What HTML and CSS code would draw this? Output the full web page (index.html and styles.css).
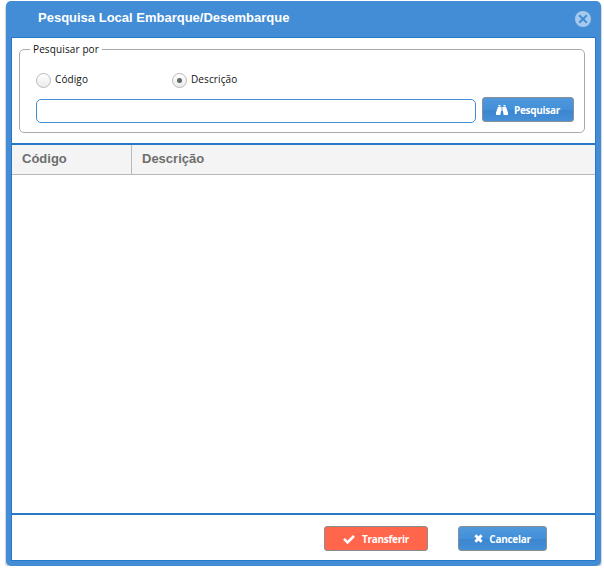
FILE: index.html
```html
<!DOCTYPE html>
<html lang="pt-BR">
<head>
<meta charset="utf-8">
<title>Pesquisa Local Embarque/Desembarque</title>
<link rel="stylesheet" href="styles.css">
</head>
<body>
<section class="dialog">
  <header class="titlebar">
    <h1><span>Pesquisa Local Embarque/Desembarque</span></h1>
    <svg class="close" viewBox="0 0 16 16"><circle cx="8" cy="8" r="8"/><path d="M4.2 4.2l7.6 7.6M11.8 4.2l-7.6 7.6"/></svg>
  </header>
  <main class="content">
    <form class="search">
      <fieldset>
        <legend>Pesquisar por</legend>
        <div class="options">
          <label><i class="radio"></i><span class="codigo">Código</span></label>
          <label><i class="radio checked"></i><span class="descricao">Descrição</span></label>
        </div>
        <div class="query">
          <input type="text">
          <button type="button" class="btn find"><svg viewBox="0 0 12 10"><path d="M2.500 0h2v1.500h-2zM7.500 0h2v1.500h-2zM2 2h3v4.500L4.300 10H0V7.500zM7 2h3l2 5.500V10H7.700L7 6.500zM5.400 2h1.200v4H5.400z"/></svg><span>Pesquisar</span></button>
        </div>
      </fieldset>
    </form>
    <div class="grid">
      <div class="columns"><div><span>Código</span></div><div><span>Descrição</span></div></div>
    </div>
    <footer>
      <button type="button" class="btn transfer"><svg viewBox="0 0 12 10"><path d="M1 4.800l3.600 3.600L11 2" fill="none" stroke="#fff" stroke-width="2.600"/></svg><span>Transferir</span></button>
      <button type="button" class="btn cancel"><svg viewBox="0 0 10 10"><path d="M1.500 1.500l7 7M8.500 1.500l-7 7" fill="none" stroke="#fff" stroke-width="3.200"/></svg><span>Cancelar</span></button>
    </footer>
  </main>
</section>
</body>
</html>
```
FILE: styles.css
```css
* { box-sizing: border-box; }
body { margin: 0; padding: 1px 0 0 6px; background: #fff; overflow: hidden; font-family: "Open Sans", sans-serif; }
.dialog { width: 595px; height: 565px; padding: 0 5px 5px; display: flex; flex-direction: column; background: #428dd5; border-radius: 5px; box-shadow: 1px 2px 1px #d4d4d4, -1px 2px 1px #d4d4d4; }
.titlebar { height: 36px; padding: 0 5px 0 27px; display: flex; justify-content: space-between; align-items: center; }
h1 { margin: 0 0 3px; font: bold 13px/16px "Liberation Sans", sans-serif; color: #fff; }
.close { width: 16px; height: 16px; fill: #a6caee; stroke: none; }
.close path { stroke: #428dd5; stroke-width: 2; fill: none; }
.content { flex: 1; display: flex; flex-direction: column; border: 1px solid #2878c8; background: #fff; }
.search { height: 105px; padding: 4px 10px 0 7px; }
fieldset { height: 91px; margin: 0; padding: 0 10px 0 16px; border: 1px solid #aaa; border-radius: 5px; min-width: 0; }
legend { margin-left: -6px; padding: 0 3px; font-size: 10px; line-height: 15px; letter-spacing: .12px; color: #111; }
.options { display: flex; height: 42px; padding-top: 16px; }
label { display: flex; width: 136px; height: 15px; gap: 4px; font-size: 10px; line-height: 13px; letter-spacing: .1px; color: #111; }
.radio { width: 15px; height: 15px; border: 1px solid #b9b9b9; border-radius: 50%; background: linear-gradient(#fff, #ececec); display: grid; place-items: center; }
.checked::after { content: ""; width: 5px; height: 5px; border-radius: 50%; background: #666; }
.query { display: flex; gap: 6px; }
input { width: 440px; height: 24px; margin: 0; border: 1px solid #428dd5; border-radius: 5px; background: #fff; outline: none; }
.btn { height: 25px; margin: 0; padding: 0; border: 1px solid #8a8f94; border-radius: 3px; display: flex; align-items: center; justify-content: center; font: 700 10px/14px "Open Sans", sans-serif; letter-spacing: -.3px; color: #fff; background: linear-gradient(#4f98dc, #4290d9 52%, #3c86cf 53%, #438fd8); }
.btn svg { fill: #fff; flex: none; }
.find { width: 92px; margin-top: -2px; gap: 6px; }
.find svg { width: 12px; height: 10px; }
.grid { flex: 1; border: solid #2878c8; border-width: 2px 0; }
.columns { display: flex; height: 30px; border-bottom: 1px solid #b9b9b9; background: #f4f4f4; font: bold 13px/27px "Liberation Sans", sans-serif; color: #6e6e6e; }
.columns div { padding-left: 10px; }
.columns div:first-child { width: 120px; border-right: 1px solid #b9b9b9; }
footer { height: 45px; padding: 11px 48px 0 0; display: flex; justify-content: flex-end; gap: 30px; }
.transfer { width: 104px; gap: 7px; background: #ff664c; }
.transfer svg { width: 12px; height: 10px; }
.cancel { width: 89px; gap: 6px; }
.cancel svg { width: 9px; height: 9px; }
```
